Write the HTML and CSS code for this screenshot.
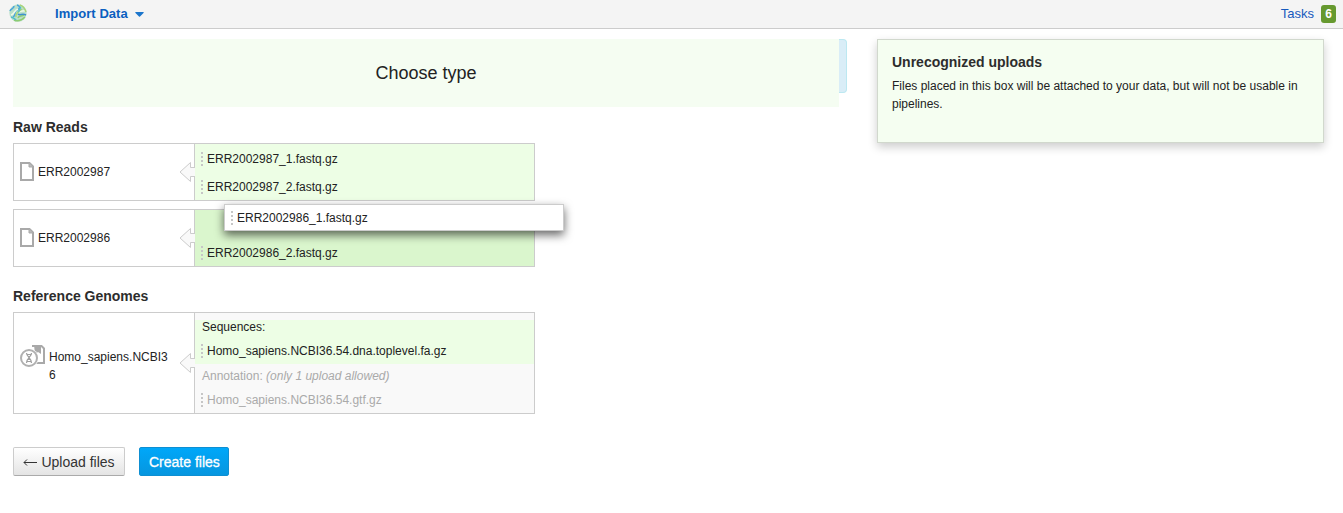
FILE: index.html
```
<!DOCTYPE html>
<html lang="en">
<head>
<meta charset="utf-8">
<title>Import Data</title>
<link rel="stylesheet" href="styles.css">
</head>
<body>
<svg class="symbols" aria-hidden="true">
  <symbol id="file" viewBox="0 0 14 19">
    <path d="M1 1H9.500L13 4.500V18H1Z" fill="#fff" stroke="#a9a9a9" stroke-width="2"/>
    <path d="M9 1V5H13" fill="#bbb" stroke="#a9a9a9"/>
  </symbol>
  <symbol id="arrow" viewBox="0 0 16 22">
    <path d="M16 6.500H11.500V1.500L1 11L11.500 20.500V15.500H16" fill="#f9f9f9" stroke="#ccc"/>
  </symbol>
</svg>
<header class="topbar">
  <svg class="logo" viewBox="0 0 18 18">
    <circle cx="9" cy="9" r="8.700" fill="#b9dfca"/>
    <g fill="none" stroke-width="1.500">
      <path d="M1 7C2 4 5 5 5 2M4 13C8 11 4 8 8 6S11 2 8 1" stroke="#4aa5dc"/>
      <path d="M2 11C6 10 5 6 9 5M10 8C12 6 15 8 17 6" stroke="#eef9e5"/>
      <path d="M11 1C15 2 16 5 17 8M7 13C6 9 10 7 13 5" stroke="#a8d478"/>
      <path d="M5 16C9 18 13 16 16 13M9 14C10 11 13 13 15 11" stroke="#8fcc70"/>
      <path d="M9 10C11 12 13 9 17 11" stroke="#3e92cc"/>
      <path d="M2 13C4 14 5 14 7 16M12 3C10 4 12 6 9 8" stroke="#52bfc6"/>
    </g>
  </svg>
  <span class="menu">Import Data</span>
  <svg class="caret" viewBox="0 0 9 5"><path d="M.5 0H8.500Q9 .5 8.500 1L5 4.600Q4.500 5 4 4.600L.5 1Q0 .5.5 0Z" fill="#1c76cc"/></svg>
  <span class="tasks">Tasks</span>
  <span class="count">6</span>
</header>
<div class="layout">
  <main class="main">
    <div class="notice"><div class="choose">Choose type</div></div>
    <h2>Raw Reads</h2>
    <section class="group">
      <div class="name"><svg class="file"><use href="#file"/></svg><span>ERR2002987</span><svg class="arrow"><use href="#arrow"/></svg></div>
      <div class="uploads green">
        <div class="item"><i class="grip"></i>ERR2002987_1.fastq.gz</div>
        <div class="item"><i class="grip"></i>ERR2002987_2.fastq.gz</div>
      </div>
    </section>
    <section class="group">
      <div class="name"><svg class="file"><use href="#file"/></svg><span>ERR2002986</span><svg class="arrow"><use href="#arrow"/></svg></div>
      <div class="uploads active">
        <div class="item"></div>
        <div class="item"><i class="grip"></i>ERR2002986_2.fastq.gz</div>
      </div>
      <div class="dragged"><i class="grip"></i>ERR2002986_1.fastq.gz</div>
    </section>
    <h2 class="second">Reference Genomes</h2>
    <section class="group genome">
      <div class="name">
        <svg class="dna" viewBox="0 0 26 22">
          <path d="M12 1H21.500L24 3.500V18H16" fill="#fff" stroke="#a9a9a9" stroke-width="2"/>
          <path d="M14 0H21V9L18 7L15 9Z" fill="#a9a9a9"/>
          <circle cx="9" cy="13" r="9.500" fill="#fff"/>
          <circle cx="9" cy="13" r="8" fill="#fff" stroke="#b0b0b0" stroke-width="2"/>
          <path d="M6.500 8C6.500 12 12 13 11.500 18M11.500 8C12 12 6 13 6.500 18M7 9.500H11M7 16.500H11M8 11.500H10M8 14.500H10" fill="none" stroke="#a0a0a0" stroke-width="1.200"/>
        </svg>
        <span class="wrap">Homo_sapiens.NCBI36</span>
        <svg class="arrow"><use href="#arrow"/></svg>
      </div>
      <div class="uploads">
        <div class="sequences">
          <div class="label">Sequences:</div>
          <div class="entry"><i class="grip"></i>Homo_sapiens.NCBI36.54.dna.toplevel.fa.gz</div>
        </div>
        <div class="annotation">
          <div class="label">Annotation: <em>(only 1 upload allowed)</em></div>
          <div class="entry"><i class="grip"></i>Homo_sapiens.NCBI36.54.gtf.gz</div>
        </div>
      </div>
    </section>
    <div class="actions">
      <button class="btn back"><svg viewBox="0 0 14 9"><path d="M14 4.500H1M4 1.500L1 4.500L4 7.500" fill="none" stroke="#333"/></svg>Upload files</button>
      <button class="btn primary">Create files</button>
    </div>
  </main>
  <aside class="unrecognized">
    <h2>Unrecognized uploads</h2>
    <p>Files placed in this box will be attached to your data, but will not be usable in pipelines.</p>
  </aside>
</div>
</body>
</html>
```

FILE: styles.css
```
* { box-sizing: border-box; }
body { margin: 0; background: #fff; color: #222; font: 12px/18px "Liberation Sans", Arial, sans-serif; }
.symbols { display: none; }
.topbar { display: flex; align-items: center; height: 29px; padding: 0 7px 1px 9px; background: #f4f4f4; border-bottom: 1px solid #ccc; }
.logo { width: 18px; height: 18px; margin-top: -1px; }
.menu { margin-left: 28px; color: #0b5fc0; font-size: 13px; font-weight: bold; letter-spacing: .05px; }
.caret { width: 9px; height: 5px; margin: 1px 0 0 7px; }
.tasks { margin-left: auto; color: #1659bd; font-size: 13px; }
.count { width: 15px; height: 18px; margin-left: 7px; border-radius: 3px; background: #66992f; color: #fff; font-weight: bold; text-align: center; }
.layout { display: flex; align-items: flex-start; gap: 30px; padding: 10px 19px 0 13px; }
.main { width: 834px; }
.notice { height: 54px; border: 1px solid #bce8f1; border-left: 0; border-radius: 4px; background: #d9edf7; }
.choose { width: 826px; height: 68px; margin-top: -1px; background: #f5fdf2; color: #222; font-size: 18px; line-height: 68px; text-align: center; }
h2 { margin: 0; color: #2d2d2d; font-size: 14px; line-height: 20px; }
.main h2 { margin-top: 24px; margin-bottom: 6px; }
.main h2.second { margin-top: 19px; }
.group { position: relative; display: flex; width: 522px; height: 58px; margin-bottom: 8px; border: 1px solid #ccc; }
.name { position: relative; display: flex; align-items: center; width: 180px; padding-left: 6px; }
.file { width: 14px; height: 19px; margin: -1px 4px 0 0; }
.arrow { position: absolute; right: -1px; top: calc(50% - 11px); width: 16px; height: 22px; z-index: 1; }
.uploads { flex: 1; border-left: 1px solid #ccc; background: #f9f9f9; }
.green { background: #edfee5; }
.active { background: #daf6cd; }
.item { display: flex; align-items: center; height: 28px; padding: 2px 0 0 6px; }
.grip { flex: none; width: 2px; height: 14px; margin-right: 4px; background: repeating-linear-gradient(#c6c6c6 0 2px, transparent 2px 4px); }
.dragged { position: absolute; z-index: 2; left: 210px; top: -6px; display: flex; align-items: center; width: 340px; height: 27px; padding-left: 6px; border: 1px solid #ccc; background: #fff; box-shadow: 0 4px 10px rgba(0,0,0,.6); }
.genome { height: 102px; margin: 0; }
.dna { flex: none; width: 26px; height: 22px; margin: -15px 3px 0 0; }
.wrap { flex: none; width: 122px; margin-top: 6px; word-break: break-all; }
.genome .uploads { padding-top: 7px; }
.sequences { height: 44px; background: #edfee5; }
.label { height: 19px; padding: 0 0 0 7px; line-height: 15px; }
.entry { display: flex; align-items: center; height: 24px; padding-left: 6px; }
.annotation { padding-top: 5px; color: #aaa; }
.actions { display: flex; gap: 14px; margin-top: 33px; }
.btn { height: 29px; padding: 0 9px; border: 1px solid #ccc; border-bottom-color: #aaa; border-radius: 2px; background: linear-gradient(#fff, #e4e4e4); color: #333; font: 14px "Liberation Sans", Arial, sans-serif; white-space: nowrap; }
.back { width: 112px; }
.back svg { width: 14px; height: 9px; margin-right: 4px; }
.primary { width: 90px; border-color: #0e8fd2; background: linear-gradient(#00a7f9, #0696df); color: #fff; -webkit-text-stroke: .3px #fff; }
.unrecognized { width: 447px; height: 104px; padding: 12px 14px; border: 1px solid #d1d8cd; background: #f5fef1; box-shadow: 0 4px 9px rgba(0,0,0,.2); }
.unrecognized p { margin: 5px 0 0; }
```
